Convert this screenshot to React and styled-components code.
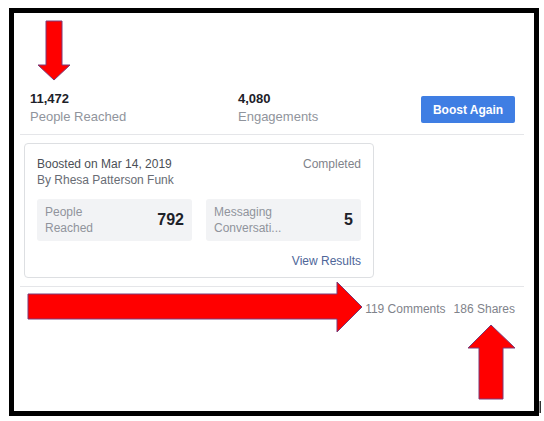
import React from "react";
import styled, { createGlobalStyle } from "styled-components";

const Global = createGlobalStyle`
  html, body { margin: 0; padding: 0; background: #ffffff; }
  body { font-family: "Liberation Sans", Arial, sans-serif; }
  #root { position: relative; width: 544px; height: 421px; overflow: hidden; }
`;

const Frame = styled.div`
  box-sizing: border-box;
  margin: 8px 0 0 9px;
  width: 530px;
  height: 408px;
  border: 5px solid #000;
  background: #fff;
  padding: 0 10px 0 6px;
`;

const Panel = styled.div`
  display: flex;
  flex-direction: column;
`;

const Header = styled.div`
  display: flex;
  align-items: center;
  padding: 78px 9px 9px 10px;
  border-bottom: 1px solid #e5e6e9;
`;

const Stat = styled.div`
  width: ${(p) => p.$width || "auto"};
  display: flex;
  flex-direction: column;
  gap: 2px;
`;

const StatValue = styled.div`
  font-size: 13px;
  line-height: 16px;
  font-weight: 700;
  color: #1d2129;
`;

const StatLabel = styled.div`
  font-size: 13px;
  line-height: 16px;
  color: #90949c;
`;

const Spacer = styled.div`
  flex: 1;
`;

const BoostButton = styled.button`
  box-sizing: border-box;
  display: flex;
  align-items: center;
  justify-content: center;
  flex: none;
  width: 94px;
  height: 27px;
  margin-top: 3px;
  border: none;
  border-radius: 2px;
  background: #3f7ee3;
  color: #fff;
  font-family: "Liberation Sans", Arial, sans-serif;
  font-size: 12px;
  font-weight: 700;
  white-space: nowrap;
  padding: 0;
`;

const CardArea = styled.div`
  padding: 8px 150px 8px 4px;
  border-bottom: 1px solid #e5e6e9;
`;

const Card = styled.div`
  box-sizing: border-box;
  width: 350px;
  border: 1px solid #dddfe2;
  border-radius: 4px;
  padding: 12px 12px 8px;
  display: flex;
  flex-direction: column;
`;

const CardTop = styled.div`
  display: flex;
  justify-content: space-between;
  align-items: flex-start;
`;

const Line = styled.div`
  font-size: 12px;
  line-height: 16px;
  color: ${(p) => p.$color || "#4b4f56"};
`;

const Metrics = styled.div`
  display: grid;
  grid-template-columns: 1fr 1fr;
  gap: 14px;
  margin-top: 11px;
`;

const Metric = styled.div`
  display: flex;
  align-items: center;
  justify-content: space-between;
  background: #f2f3f5;
  border-radius: 3px;
  padding: 5px 8px;
`;

const MetricLabel = styled.div`
  font-size: 12px;
  line-height: 16px;
  color: #90949c;
  width: 80px;
  white-space: pre-line;
`;

const MetricValue = styled.div`
  font-size: 16px;
  font-weight: 700;
  color: #1d2129;
`;

const ViewLink = styled.a`
  align-self: flex-end;
  margin-top: 12px;
  font-size: 12px;
  line-height: 16px;
  color: #4e6699;
  text-decoration: none;
`;

const Footer = styled.div`
  display: flex;
  justify-content: flex-end;
  gap: 8px;
  padding: 14px 9px 0 0;
`;

const FooterItem = styled.span`
  font-size: 12px;
  line-height: 16px;
  color: #7f838b;
`;

const Overlay = styled.svg`
  position: absolute;
  left: 0;
  top: 0;
  pointer-events: none;
`;

export default function App() {
  return (
    <>
      <Global />
      <Frame>
        <Panel>
          <Header>
            <Stat $width="208px">
              <StatValue>11,472</StatValue>
              <StatLabel>People Reached</StatLabel>
            </Stat>
            <Stat>
              <StatValue>4,080</StatValue>
              <StatLabel>Engagements</StatLabel>
            </Stat>
            <Spacer />
            <BoostButton>Boost Again</BoostButton>
          </Header>
          <CardArea>
            <Card>
              <CardTop>
                <div>
                  <Line>Boosted on Mar 14, 2019</Line>
                  <Line $color="#686c74">By Rhesa Patterson Funk</Line>
                </div>
                <Line $color="#7f838b">Completed</Line>
              </CardTop>
              <Metrics>
                <Metric>
                  <MetricLabel>{"People\nReached"}</MetricLabel>
                  <MetricValue>792</MetricValue>
                </Metric>
                <Metric>
                  <MetricLabel>{"Messaging\nConversati..."}</MetricLabel>
                  <MetricValue>5</MetricValue>
                </Metric>
              </Metrics>
              <ViewLink>View Results</ViewLink>
            </Card>
          </CardArea>
          <Footer>
            <FooterItem>119 Comments</FooterItem>
            <FooterItem>186 Shares</FooterItem>
          </Footer>
        </Panel>
      </Frame>
      <Overlay width="544" height="421" viewBox="0 0 544 421">
        <g fill="#ff0000" stroke="#7a3b78" strokeWidth="1">
          <polygon points="46,21 62,21 62,65 70,65 54,80 38,65 46,65" />
          <polygon points="28,294 337,294 337,282 362,307 337,332 337,319 28,319" />
          <polygon points="491,325 515,348 503,348 503,399 479,399 479,348 468,348" />
        </g>
        <rect x="539.5" y="401" width="1.5" height="12" fill="#333" />
      </Overlay>
    </>
  );
}
